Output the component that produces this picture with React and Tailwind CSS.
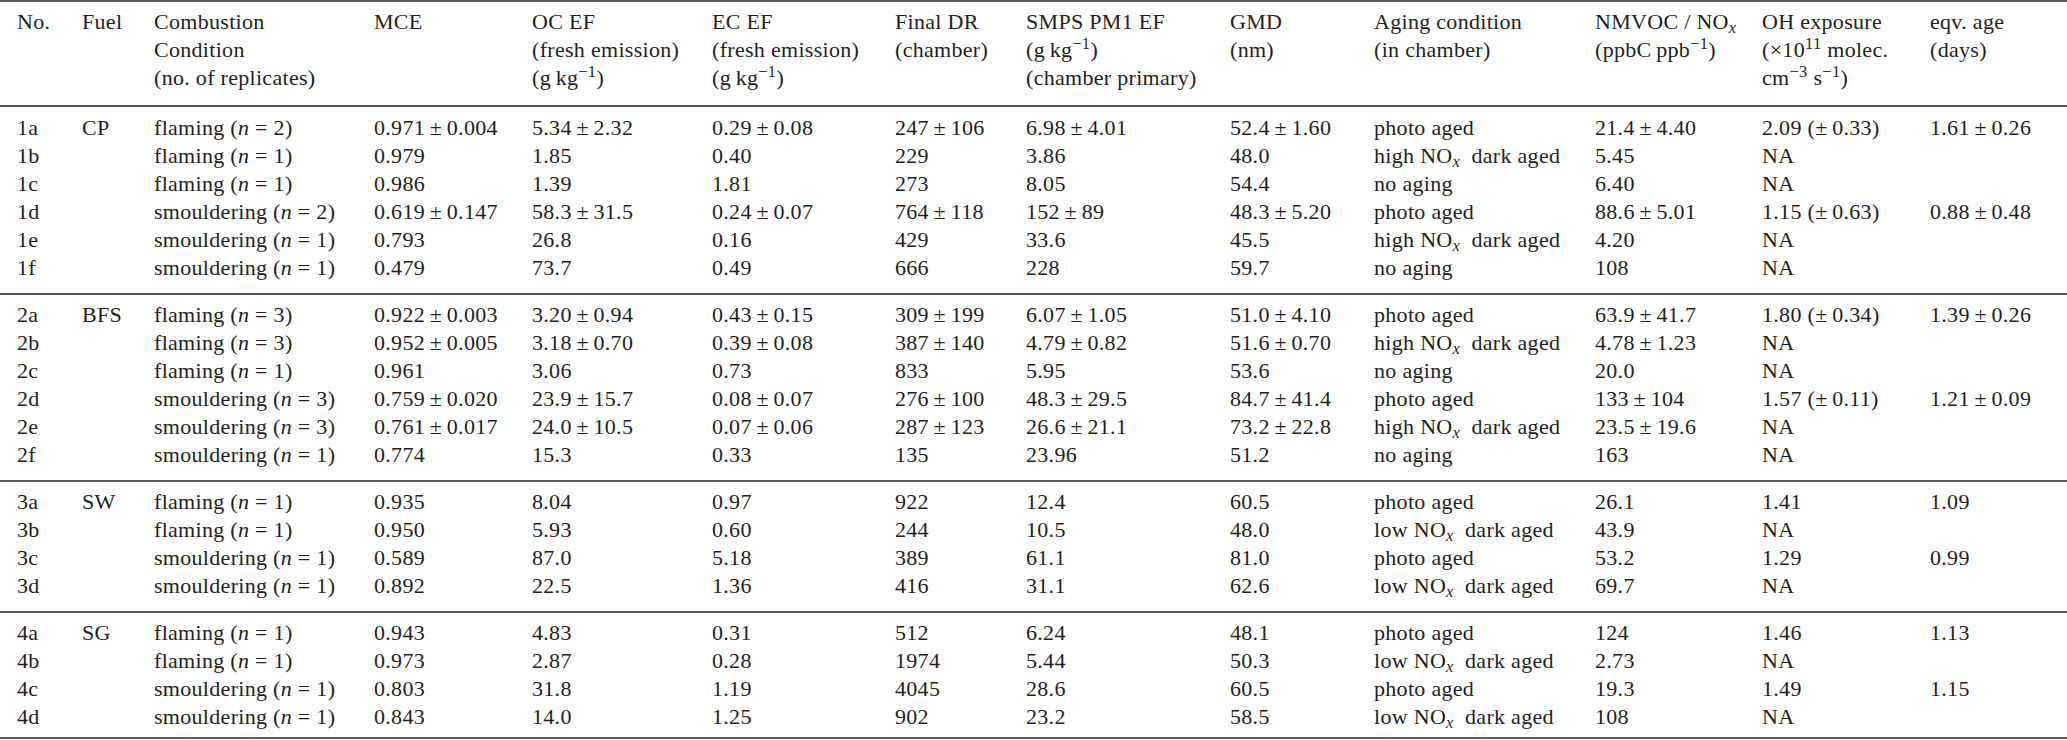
import React from "react";

const COLS =
  "grid grid-cols-[65px_72px_220px_158px_180px_183px_131px_204px_144px_221px_167px_168px_1fr]";

const groups = [
  {
    fuel: "CP",
    rows: [
      ["1a", "flaming", 2, "0.971±0.004", "5.34±2.32", "0.29±0.08", "247±106", "6.98±4.01", "52.4±1.60", "photo aged", "21.4±4.40", "2.09 (±0.33)", "1.61±0.26"],
      ["1b", "flaming", 1, "0.979", "1.85", "0.40", "229", "3.86", "48.0", "high NOx dark aged", "5.45", "NA", ""],
      ["1c", "flaming", 1, "0.986", "1.39", "1.81", "273", "8.05", "54.4", "no aging", "6.40", "NA", ""],
      ["1d", "smouldering", 2, "0.619±0.147", "58.3±31.5", "0.24±0.07", "764±118", "152±89", "48.3±5.20", "photo aged", "88.6±5.01", "1.15 (±0.63)", "0.88±0.48"],
      ["1e", "smouldering", 1, "0.793", "26.8", "0.16", "429", "33.6", "45.5", "high NOx dark aged", "4.20", "NA", ""],
      ["1f", "smouldering", 1, "0.479", "73.7", "0.49", "666", "228", "59.7", "no aging", "108", "NA", ""],
    ],
  },
  {
    fuel: "BFS",
    rows: [
      ["2a", "flaming", 3, "0.922±0.003", "3.20±0.94", "0.43±0.15", "309±199", "6.07±1.05", "51.0±4.10", "photo aged", "63.9±41.7", "1.80 (±0.34)", "1.39±0.26"],
      ["2b", "flaming", 3, "0.952±0.005", "3.18±0.70", "0.39±0.08", "387±140", "4.79±0.82", "51.6±0.70", "high NOx dark aged", "4.78±1.23", "NA", ""],
      ["2c", "flaming", 1, "0.961", "3.06", "0.73", "833", "5.95", "53.6", "no aging", "20.0", "NA", ""],
      ["2d", "smouldering", 3, "0.759±0.020", "23.9±15.7", "0.08±0.07", "276±100", "48.3±29.5", "84.7±41.4", "photo aged", "133±104", "1.57 (±0.11)", "1.21±0.09"],
      ["2e", "smouldering", 3, "0.761±0.017", "24.0±10.5", "0.07±0.06", "287±123", "26.6±21.1", "73.2±22.8", "high NOx dark aged", "23.5±19.6", "NA", ""],
      ["2f", "smouldering", 1, "0.774", "15.3", "0.33", "135", "23.96", "51.2", "no aging", "163", "NA", ""],
    ],
  },
  {
    fuel: "SW",
    rows: [
      ["3a", "flaming", 1, "0.935", "8.04", "0.97", "922", "12.4", "60.5", "photo aged", "26.1", "1.41", "1.09"],
      ["3b", "flaming", 1, "0.950", "5.93", "0.60", "244", "10.5", "48.0", "low NOx dark aged", "43.9", "NA", ""],
      ["3c", "smouldering", 1, "0.589", "87.0", "5.18", "389", "61.1", "81.0", "photo aged", "53.2", "1.29", "0.99"],
      ["3d", "smouldering", 1, "0.892", "22.5", "1.36", "416", "31.1", "62.6", "low NOx dark aged", "69.7", "NA", ""],
    ],
  },
  {
    fuel: "SG",
    rows: [
      ["4a", "flaming", 1, "0.943", "4.83", "0.31", "512", "6.24", "48.1", "photo aged", "124", "1.46", "1.13"],
      ["4b", "flaming", 1, "0.973", "2.87", "0.28", "1974", "5.44", "50.3", "low NOx dark aged", "2.73", "NA", ""],
      ["4c", "smouldering", 1, "0.803", "31.8", "1.19", "4045", "28.6", "60.5", "photo aged", "19.3", "1.49", "1.15"],
      ["4d", "smouldering", 1, "0.843", "14.0", "1.25", "902", "23.2", "58.5", "low NOx dark aged", "108", "NA", ""],
    ],
  },
];

function NOx() {
  return (
    <>
      NO<sub className="italic">x</sub>
    </>
  );
}

function GKg() {
  return (
    <>
      (g{"\u2009"}kg<sup>−1</sup>)
    </>
  );
}

// spaces around ± like the typeset table
function spacePm(s) {
  return s.replace(/\(±/g, "(±\u2009").replace(/([^(])±/g, "$1\u2009±\u2009");
}

function Val({ v }) {
  if (!v) return null;
  const parts = v.split("NOx");
  return parts.map((p, i) => (
    <React.Fragment key={i}>
      {i > 0 && <NOx />}
      {i > 0 ? p.replace(/^ /, "\u2002") : spacePm(p)}
    </React.Fragment>
  ));
}

function Header() {
  return (
    <div className={`${COLS} pl-[17px] pt-[6px] pb-[13px] border-b-2 border-[#5a5a5a]`}>
      <div>No.</div>
      <div>Fuel</div>
      <div>
        Combustion
        <br />
        Condition
        <br />
        (no. of replicates)
      </div>
      <div>MCE</div>
      <div>
        OC EF
        <br />
        (fresh emission)
        <br />
        <GKg />
      </div>
      <div>
        EC EF
        <br />
        (fresh emission)
        <br />
        <GKg />
      </div>
      <div>
        Final DR
        <br />
        (chamber)
      </div>
      <div>
        SMPS PM1 EF
        <br />
        <GKg />
        <br />
        (chamber primary)
      </div>
      <div>
        GMD
        <br />
        (nm)
      </div>
      <div>
        Aging condition
        <br />
        (in chamber)
      </div>
      <div>
        NMVOC / <NOx />
        <br />
        (ppbC{"\u2009"}ppb<sup>−1</sup>)
      </div>
      <div>
        OH exposure
        <br />
        (×10<sup>11</sup> molec.
        <br />
        cm<sup>−3</sup> s<sup>−1</sup>)
      </div>
      <div>
        eqv. age
        <br />
        (days)
      </div>
    </div>
  );
}

function Row({ row, fuel }) {
  const [no, kind, n, ...rest] = row;
  return (
    <div className={COLS}>
      <div>{no}</div>
      <div>{fuel}</div>
      <div>
        {kind} (<span className="italic">n</span> = {n})
      </div>
      {rest.map((v, i) => (
        <div key={i} className="whitespace-nowrap">
          <Val v={v} />
        </div>
      ))}
    </div>
  );
}

export default function App() {
  return (
    <div className="w-[2067px] h-[740px] bg-white text-[#231f20] font-['Liberation_Serif','Times_New_Roman',serif] text-[22px] leading-[28px] tracking-[0.3px] overflow-hidden">
      <div className="border-t-2 border-[#5a5a5a]">
        <Header />
        {groups.map((g, gi) => {
          const last = gi === groups.length - 1;
          return (
            <div
              key={g.fuel}
              className={`pl-[17px] border-b-2 border-[#5a5a5a] ${
                gi === 0 ? "pt-[7px]" : "pt-[6px]"
              } ${last ? "pb-[6px]" : "pb-[11px]"}`}
            >
              {g.rows.map((r, ri) => (
                <Row key={r[0]} row={r} fuel={ri === 0 ? g.fuel : ""} />
              ))}
            </div>
          );
        })}
      </div>
    </div>
  );
}
